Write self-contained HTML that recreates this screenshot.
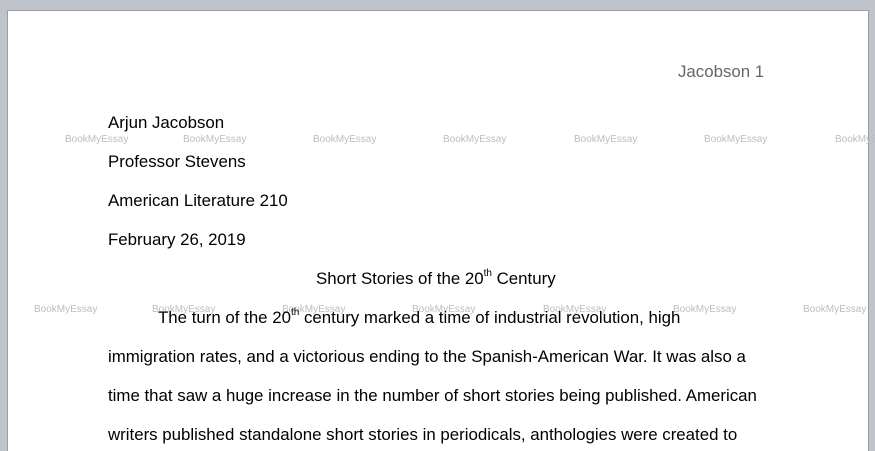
<!DOCTYPE html>
<html><head><style>
html,body{margin:0;width:875px;height:451px;overflow:hidden}
body{background:#bfc3cb;position:relative;font-family:"Liberation Sans",Arial,sans-serif}
.page{position:absolute;left:7px;top:10px;width:860px;height:460px;background:#fff;border-top:1px solid #9a9da3;border-left:1px solid #9a9da3;border-right:1px solid #9a9da3}
.t{position:absolute;font-size:16.85px;color:#000;white-space:nowrap;line-height:20px}
.w{position:absolute;font-size:10px;color:#bdbdbd;white-space:nowrap;line-height:12px}
sup{font-size:10px;vertical-align:top;line-height:10px}
</style></head><body>
<div class="page"></div>
<div class="t" style="left:678px;top:62px;color:#666">Jacobson 1</div>
<div class="w" style="left:65px;top:134px">BookMyEssay</div>
<div class="w" style="left:183px;top:134px">BookMyEssay</div>
<div class="w" style="left:313px;top:134px">BookMyEssay</div>
<div class="w" style="left:443px;top:134px">BookMyEssay</div>
<div class="w" style="left:574px;top:134px">BookMyEssay</div>
<div class="w" style="left:704px;top:134px">BookMyEssay</div>
<div class="w" style="left:835px;top:134px">BookMyEssay</div>
<div class="w" style="left:34px;top:304px">BookMyEssay</div>
<div class="w" style="left:152px;top:304px">BookMyEssay</div>
<div class="w" style="left:282px;top:304px">BookMyEssay</div>
<div class="w" style="left:412px;top:304px">BookMyEssay</div>
<div class="w" style="left:543px;top:304px">BookMyEssay</div>
<div class="w" style="left:673px;top:304px">BookMyEssay</div>
<div class="w" style="left:803px;top:304px">BookMyEssay</div>
<div class="t" style="left:108px;top:113px">Arjun Jacobson</div>
<div class="t" style="left:108px;top:152px">Professor Stevens</div>
<div class="t" style="left:108px;top:191px">American Literature 210</div>
<div class="t" style="left:108px;top:230px">February 26, 2019</div>
<div class="t" style="left:316px;top:269px">Short Stories of the 20<sup>th</sup> Century</div>
<div class="t" style="left:158px;top:308px">The turn of the 20<sup>th</sup> century marked a time of industrial revolution, high</div>
<div class="t" style="left:108px;top:347px">immigration rates, and a victorious ending to the Spanish-American War. It was also a</div>
<div class="t" style="left:108px;top:386px">time that saw a huge increase in the number of short stories being published. American</div>
<div class="t" style="left:108px;top:425px">writers published standalone short stories in periodicals, anthologies were created to</div>
</body></html>
